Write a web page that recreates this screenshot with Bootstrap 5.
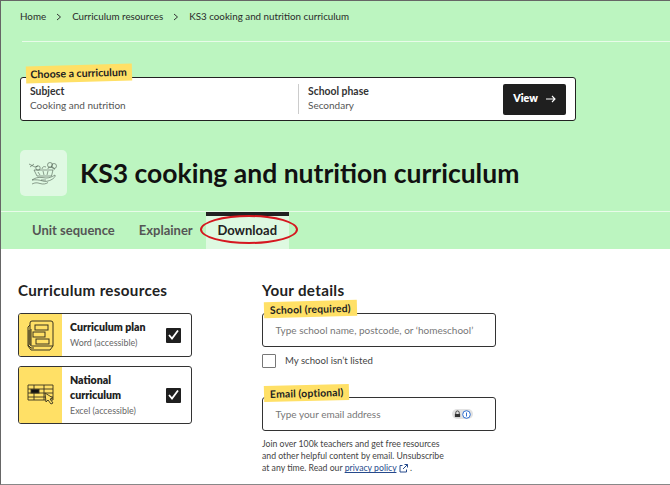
<!DOCTYPE html>
<html lang="en"><head><meta charset="utf-8">
<link href="https://cdn.jsdelivr.net/npm/bootstrap@5.3.0/dist/css/bootstrap.min.css" rel="stylesheet">
<style>
html,body{height:485px;overflow:hidden}
body{font-family:"Lato","Liberation Sans",sans-serif;color:#222;background:#fff;}
.frame{width:670px;height:485px;border-left:1px solid #666;border-top:1px solid #666;border-bottom:1px solid #888;overflow:hidden}
.hero{background:#bcf5c0;height:248px;display:flex;flex-direction:column}
.crumbs{height:40px;margin:0;padding:0 0 9px 19px;font-size:9.800px;color:#2a2a2a;align-items:center;gap:10px;list-style:none;flex:none}
.crumbs svg{display:block}
.rule-top{height:1px;background:#e8fbe9;margin-left:21px;flex:none}
.pick{position:relative;margin:35px 0 0 19px;width:556px;height:44px;background:#fff;border:1.5px solid #222;border-radius:3px;flex:none}
.tag{position:absolute;background:#ffe066;font-weight:700;color:#222;transform:rotate(-1.5deg);transform-origin:center;white-space:nowrap}
.pick .tag{left:5px;top:-13.500px;height:17px;width:106px;font-size:10.6px;line-height:17px;padding-left:4.500px}
.pick-a{width:278px;padding:0 0 0 9px;border-right:1px solid #ccc;margin:6px 0}
.pick-b{padding-left:9px;margin-top:6px}
.pick-t{font-size:10.4px;font-weight:700;line-height:14px;color:#333}
.pick-s{font-size:10px;line-height:14px;color:#555}
.view{width:63px;height:31px;background:#1f1f1f;color:#fff;font-size:10.6px;font-weight:800;border-radius:2px;margin:5.500px 9px 0 auto;gap:8px;border:0;padding:0}
.head{margin:28px 0 0 19px;gap:13px;flex:none}
.pic{width:47px;height:46px;background:#dff9e2;border-radius:5px}
.pgtitle{font-size:26.5px;font-weight:700;color:#111;margin:0;line-height:46px;padding-top:1px}
.rule-mid{height:1px;background:#e8fbe9;margin-top:15px;flex:none}
.tabs{flex:1;padding-left:12px;align-items:stretch}
.tabx{font-size:13px;font-weight:700;color:#555;display:flex;align-items:center;padding:1px 0 0;position:relative}
.tab-a{margin-left:19px}
.tab-b{margin-left:24px}
.tabx.sel{background:#def9e1;color:#222;border-top:4px solid #222;width:83px;justify-content:center;padding:0 0 4px;margin-left:13px}
.ring{position:absolute;left:-6px;top:-1px;width:98px;height:29px;border:2.5px solid #d5171f;border-radius:50%}
.lower{padding:32px 0 0 17px;gap:70px}
.colA{width:174px}
.colB{width:234px}
.h-sec{font-size:15.2px;font-weight:700;color:#222;margin:0;line-height:18px;letter-spacing:.3px}
.res{border:1.5px solid #333;border-radius:3px;background:#fff;overflow:hidden;margin-bottom:9px}
.res-ic{width:43px;background:#ffe066;flex:none}
.res-b{padding:0 10px 0 8px;flex:1}
.res-t{font-size:10.6px;font-weight:800;color:#222;line-height:15px}
.res-s{font-size:8.9px;color:#666;line-height:14px;margin-top:1px}
.chk{width:15px;height:15px;background:#1f1f1f;flex:none;border-radius:1px}
.fld{position:relative;border:1.5px solid #333;border-radius:3px;height:34px;padding:0 12.500px;font-size:10px;color:#777;background:#fff;white-space:nowrap}
.fld .tag{left:1px;top:-13px;height:16px;font-size:10.4px;line-height:16px;padding:0 6px;letter-spacing:.15px}
.box{width:14px;height:14px;border:1.5px solid #777;border-radius:1px;flex:none}
.chkline{gap:9px;margin-top:7px;font-size:9.6px;color:#444;height:14px}
.note{font-size:8.700px;line-height:12px;color:#444;margin:7px 0 0;white-space:nowrap}
.note a{color:#264a8c}
.pm{background:#e2e2e2;border-radius:5px;height:10px;padding:0 2px;gap:1px;margin-right:10px}
</style></head>
<body><div class="frame">
<header class="hero">
  <ol class="crumbs d-flex">
    <li>Home</li>
    <li><svg width="6" height="8" viewBox="0 0 6 8"><path d="M1 1l3.500 3-3.500 3" fill="none" stroke="#333"/></svg></li>
    <li>Curriculum resources</li>
    <li><svg width="6" height="8" viewBox="0 0 6 8"><path d="M1 1l3.500 3-3.500 3" fill="none" stroke="#333"/></svg></li>
    <li>KS3 cooking and nutrition curriculum</li>
  </ol>
  <div class="rule-top"></div>
  <div class="pick d-flex">
    <span class="tag">Choose a curriculum</span>
    <div class="pick-a"><div class="pick-t">Subject</div><div class="pick-s">Cooking and nutrition</div></div>
    <div class="pick-b"><div class="pick-t">School phase</div><div class="pick-s">Secondary</div></div>
    <button class="view btn d-flex align-items-center justify-content-center">View
      <svg width="10" height="8" viewBox="0 0 10 8"><path d="M0 4h9M6 1l3 3-3 3" fill="none" stroke="#fff" stroke-width="1.100"/></svg></button>
  </div>
  <div class="head d-flex align-items-center">
    <div class="pic d-flex align-items-center justify-content-center">
      <svg width="32" height="24" viewBox="0 0 32 24" fill="none" stroke="#3f4f42" stroke-width=".55">
        <path d="M1 3l6 3 3-1M2 6l4-3M6 9h19l-1.500 6H9z"/><circle cx="10" cy="7" r="2.200"/><path d="M14 8c0-2 2-3 4-2"/><circle cx="22" cy="4" r="2.500"/><circle cx="26" cy="5" r="2.500"/><path d="M20 8c0-2 1-2 3-2s4 1 3 3"/><path d="M10 11l2 3M15 10l1 4M20 10l-1 4"/>
        <path d="M4 19c3-2 6-3 10-2.500l4 .5c3 0 6-1 9-3 1 2-3 5-7 6-3 1-5 0-7-.5s-5-1-9-.5z"/><path d="M13 19h5"/><path d="M4 23c3-1.500 5-1.500 8-.5s6 .5 8-1"/>
      </svg>
    </div>
    <h1 class="pgtitle">KS3 cooking and nutrition curriculum</h1>
  </div>
  <div class="rule-mid"></div>
  <nav class="tabs d-flex">
    <div class="tabx tab-a">Unit sequence</div>
    <div class="tabx tab-b">Explainer</div>
    <div class="tabx sel">Download<span class="ring"></span></div>
  </nav>
</header>
<main class="lower d-flex">
  <section class="colA">
    <h2 class="h-sec" style="margin-bottom:14px">Curriculum resources</h2>
    <div class="res d-flex" style="height:44px">
      <div class="res-ic d-flex align-items-center justify-content-center">
        <svg width="27" height="31" viewBox="0 0 27 31" fill="none" stroke="#3a3420" stroke-width="1">
          <path d="M5 1h19a2 2 0 0 1 2 2v23H5a2 2 0 0 1-2-2V3a2 2 0 0 1 2-2z"/><path d="M3 5L1 7v19l3 4h19l3-4M1 25l3 3h3"/><rect x="8" y="5" width="13" height="5"/><rect x="6" y="12" width="12" height="5"/><rect x="9" y="19" width="13" height="5"/><path d="M2 10v15M4 9v16"/>
        </svg>
      </div>
      <div class="res-b d-flex align-items-center justify-content-between">
        <div><div class="res-t">Curriculum plan</div><div class="res-s">Word (accessible)</div></div>
        <div class="chk d-flex align-items-center justify-content-center"><svg width="11" height="10" viewBox="0 0 11 10"><path d="M1 5l3 3.500 6-8" fill="none" stroke="#fff" stroke-width="1.800"/></svg></div>
      </div>
    </div>
    <div class="res d-flex" style="height:58px">
      <div class="res-ic d-flex align-items-center justify-content-center">
        <svg width="28" height="22" viewBox="0 0 28 22" fill="none" stroke="#3a3420" stroke-width=".9">
          <path d="M1 1h25v15H1zM1 5h25M1 9h25M1 13h25M7 1v15M17 1v15"/><rect x="4" y="5.500" width="8" height="3.500" fill="#111"/><path d="M18 9l1 9 2-2 3 4 2-1-3-4 3-1z" fill="#ffe066"/>
        </svg>
      </div>
      <div class="res-b d-flex align-items-center justify-content-between">
        <div><div class="res-t">National<br>curriculum</div><div class="res-s">Excel (accessible)</div></div>
        <div class="chk d-flex align-items-center justify-content-center"><svg width="11" height="10" viewBox="0 0 11 10"><path d="M1 5l3 3.500 6-8" fill="none" stroke="#fff" stroke-width="1.800"/></svg></div>
      </div>
    </div>
  </section>
  <section class="colB">
    <h2 class="h-sec" style="margin-bottom:14px">Your details</h2>
    <div class="fld d-flex align-items-center"><span class="tag">School (required)</span>Type school name, postcode, or ‘homeschool’</div>
    <div class="chkline d-flex align-items-center"><span class="box"></span>My school isn’t listed</div>
    <div class="fld d-flex align-items-center justify-content-between" style="margin-top:29px"><span class="tag">Email (optional)</span>Type your email address
      <span class="pm d-flex align-items-center">
        <svg width="7" height="8" viewBox="0 0 8 8"><path d="M2 4V2.500a2 2 0 0 1 4 0V4" fill="none" stroke="#333"/><rect x="1" y="4" width="6" height="3.500" fill="#333"/></svg>
        <svg width="9" height="9" viewBox="0 0 9 9"><circle cx="4.500" cy="4.500" r="3.800" fill="#fff" stroke="#2f6fd0"/><path d="M4.500 2.500v4" stroke="#2f6fd0"/></svg>
      </span></div>
    <p class="note">Join over 100k teachers and get free resources<br>and other helpful content by email. Unsubscribe<br>at any time. Read our <a href="#">privacy policy</a> <svg width="9" height="9" viewBox="0 0 9 9" fill="none" stroke="#264a8c"><path d="M7.500 5.500v2.500h-6.500v-6.500h2.500M4 5l4.500-4.500M5.500.5h3v3"/></svg> .</p>
  </section>
</main>
</div>
<script src="https://cdn.jsdelivr.net/npm/bootstrap@5.3.0/dist/js/bootstrap.bundle.min.js"></script>
</body></html>
